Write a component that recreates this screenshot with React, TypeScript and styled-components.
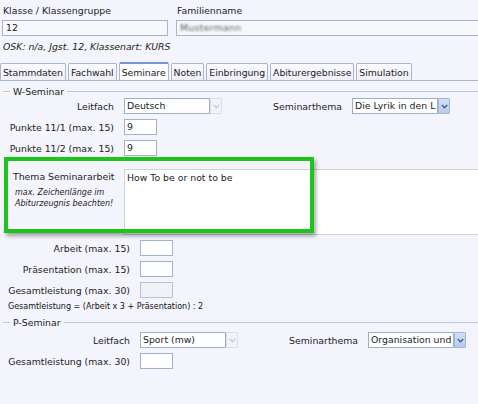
import React from 'react';
import styled, { createGlobalStyle } from 'styled-components';

const GlobalStyle = createGlobalStyle`
  html, body {
    margin: 0;
    padding: 0;
    background: #f4f4fc;
  }
  body {
    font-family: "DejaVu Sans", Verdana, sans-serif;
    font-size: 7pt;
    color: #1c1c1c;
  }
`;

const tabs = ['Stammdaten', 'Fachwahl', 'Seminare', 'Noten', 'Einbringung', 'Abiturergebnisse', 'Simulation'];

const Chevron: React.FC = () => (
  <svg width="7" height="5" viewBox="0 0 7 5">
    <polyline points="0.8,1 3.5,3.8 6.2,1" fill="none" stroke="currentColor" strokeWidth="1.3" />
  </svg>
);

const Select: React.FC<{ value: string; disabled?: boolean }> = ({ value, disabled }) => (
  <SelectBox>
    <SelectField>{value}</SelectField>
    <SelectArrow $disabled={disabled}>
      <Chevron />
    </SelectArrow>
  </SelectBox>
);

const Legend: React.FC<{ title: string }> = ({ title }) => (
  <LegendRow>
    <LegendLine $short />
    <LegendText>{title}</LegendText>
    <LegendLine />
  </LegendRow>
);

const App: React.FC = () => {
  return (
    <>
      <GlobalStyle />
      <Page>
        <Header>
          <div>
            <FieldLabel>Klasse / Klassengruppe</FieldLabel>
            <HeaderInput>12</HeaderInput>
          </div>
          <div>
            <FieldLabel>Familienname</FieldLabel>
            <HeaderInput $open>
              <Blurred>Mustermann</Blurred>
            </HeaderInput>
          </div>
        </Header>
        <InfoLine>OSK: n/a, Jgst. 12, Klassenart: KURS</InfoLine>

        <TabBar>
          {tabs.map(t => (
            <Tab key={t} $active={t === 'Seminare'}>{t}</Tab>
          ))}
        </TabBar>

        <Legend title="W-Seminar" />
        <Rows $top={1}>
          <Row $label={114} $split={130}>
            <RowLabel>Leitfach</RowLabel>
            <Select value="Deutsch" disabled />
            <RowLabel>Seminarthema</RowLabel>
            <Select value="Die Lyrik in den L" />
          </Row>
          <Row $label={114}>
            <RowLabel>Punkte 11/1 (max. 15)</RowLabel>
            <SmallInput>9</SmallInput>
          </Row>
          <Row $label={114}>
            <RowLabel>Punkte 11/2 (max. 15)</RowLabel>
            <SmallInput>9</SmallInput>
          </Row>
        </Rows>

        <ThemaRow>
          <ThemaLabel>
            Thema Seminararbeit
            <Hint>max. Zeichenlänge im<br />Abiturzeugnis beachten!</Hint>
          </ThemaLabel>
          <TextArea>How To be or not to be</TextArea>
        </ThemaRow>

        <Rows $top={5}>
          <Row $label={130}>
            <RowLabel>Arbeit (max. 15)</RowLabel>
            <SmallInput />
          </Row>
          <Row $label={130}>
            <RowLabel>Präsentation (max. 15)</RowLabel>
            <SmallInput />
          </Row>
          <Row $label={130}>
            <RowLabel>Gesamtleistung (max. 30)</RowLabel>
            <SmallInput $readOnly />
          </Row>
        </Rows>
        <Formula>Gesamtleistung = (Arbeit x 3 + Präsentation) : 2</Formula>

        <Legend title="P-Seminar" />
        <Rows $top={4}>
          <Row $label={130} $split={130}>
            <RowLabel>Leitfach</RowLabel>
            <Select value="Sport (mw)" disabled />
            <RowLabel>Seminarthema</RowLabel>
            <Select value="Organisation und" />
          </Row>
          <Row $label={130}>
            <RowLabel>Gesamtleistung (max. 30)</RowLabel>
            <SmallInput />
          </Row>
        </Rows>

        <Highlight />
      </Page>
    </>
  );
};

const Page = styled.div`
  position: relative;
  width: 478px;
  height: 404px;
  overflow: hidden;
  background: #f4f4fc;
`;

const Header = styled.div`
  display: grid;
  grid-template-columns: 166px 1fr;
  column-gap: 8px;
  padding: 5px 0 0 2px;
`;

const FieldLabel = styled.div`
  line-height: 11px;
  padding-left: 1px;
  margin-bottom: 4px;
  white-space: nowrap;
`;

const HeaderInput = styled.div<{ $open?: boolean }>`
  height: 16px;
  box-sizing: border-box;
  border: 1px solid #a6b5cf;
  border-right: ${p => (p.$open ? 'none' : '1px solid #a6b5cf')};
  background: #f7f7fd;
  padding-left: 3px;
  line-height: 14px;
  overflow: hidden;
`;

const Blurred = styled.span`
  color: #5f5f5f;
  filter: blur(1.1px);
  letter-spacing: 0.3px;
`;

const InfoLine = styled.div`
  margin-top: 5px;
  padding-left: 3px;
  line-height: 11px;
  font-style: italic;
`;

const TabBar = styled.div`
  display: flex;
  align-items: flex-end;
  gap: 2px;
  height: 18px;
  margin-top: 10px;
  border-bottom: 1px solid #a9b5cc;
`;

const Tab = styled.div<{ $active?: boolean }>`
  height: ${p => (p.$active ? '18px' : '17px')};
  box-sizing: border-box;
  display: flex;
  align-items: center;
  padding: 0 2px;
  border: 1px solid #aab6cb;
  border-top: ${p => (p.$active ? '2px solid #7595dc' : '1px solid #aab6cb')};
  border-bottom: none;
  border-radius: 2px 2px 0 0;
  background: ${p => (p.$active ? '#fdfdff' : 'linear-gradient(#fafaff, #eeeff8)')};
  white-space: nowrap;
  line-height: 11px;
  letter-spacing: -0.05px;
`;

const LegendRow = styled.div`
  display: flex;
  align-items: center;
  gap: 3px;
  height: 11px;
  margin-top: 5px;
  padding-left: 3px;
`;

const LegendLine = styled.div<{ $short?: boolean }>`
  height: 1px;
  background: #c3c5cf;
  flex: ${p => (p.$short ? '0 0 7px' : '1 1 auto')};
`;

const LegendText = styled.span`
  line-height: 11px;
`;

const Rows = styled.div<{ $top: number }>`
  display: flex;
  flex-direction: column;
  gap: 5px;
  margin-top: ${p => p.$top}px;
`;

const Row = styled.div<{ $label: number; $split?: number }>`
  display: grid;
  grid-template-columns: ${p => (p.$split ? `${p.$label}px ${p.$split}px 78px auto` : `${p.$label}px auto`)};
  column-gap: 10px;
  align-items: center;
  height: 16px;
`;

const RowLabel = styled.div`
  text-align: right;
  white-space: nowrap;
  line-height: 11px;
`;

const SelectBox = styled.div`
  display: flex;
  height: 16px;
`;

const SelectField = styled.div`
  width: 86px;
  box-sizing: border-box;
  border: 1px solid #9eafcd;
  background: #fff;
  padding: 0 2px;
  line-height: 14px;
  white-space: nowrap;
  overflow: hidden;
`;

const SelectArrow = styled.div<{ $disabled?: boolean }>`
  width: 12px;
  box-sizing: border-box;
  display: flex;
  align-items: center;
  justify-content: center;
  border: 1px solid ${p => (p.$disabled ? '#dcdee6' : '#a2b6dc')};
  border-radius: 1px;
  background: ${p => (p.$disabled ? '#f3f3f8' : 'linear-gradient(#d3e0f6, #b9cbec)')};
  color: ${p => (p.$disabled ? '#c6cad6' : '#475c8a')};
`;

const SmallInput = styled.div<{ $readOnly?: boolean }>`
  width: 33px;
  height: 16px;
  box-sizing: border-box;
  border: 1px solid ${p => (p.$readOnly ? '#b6c2d6' : '#a2b2cc')};
  background: ${p => (p.$readOnly ? '#f1f1f8' : '#fff')};
  padding-left: 2px;
  line-height: 14px;
`;

const ThemaRow = styled.div`
  display: grid;
  grid-template-columns: 114px 1fr;
  column-gap: 10px;
  margin-top: 13px;
`;

const ThemaLabel = styled.div`
  padding: 2px 0 0 13px;
  line-height: 11px;
  white-space: nowrap;
`;

const Hint = styled.div`
  margin-top: 5px;
  padding-left: 2px;
  font-size: 8px;
  font-style: italic;
  line-height: 11px;
`;

const TextArea = styled.div`
  height: 66px;
  box-sizing: border-box;
  margin-right: -4px;
  border: 1px solid #cfd0d8;
  background: #fff;
  padding: 2px 2px;
  line-height: 11px;
`;

const Formula = styled.div`
  margin-top: 4px;
  padding-left: 8px;
  font-size: 8px;
  line-height: 10px;
  color: #111;
`;

const Highlight = styled.div`
  position: absolute;
  left: 4px;
  top: 157px;
  width: 310px;
  height: 76px;
  box-sizing: border-box;
  border: 4px solid #1cc41c;
  box-shadow: 2px 3px 4px rgba(0, 0, 0, 0.35);
  pointer-events: none;
`;

export default App;
